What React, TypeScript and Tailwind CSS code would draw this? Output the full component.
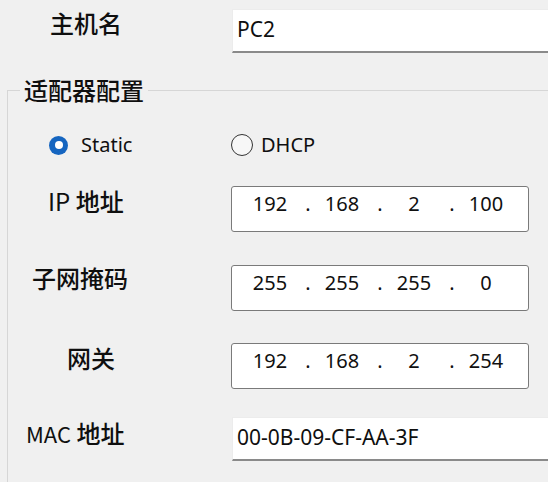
import React, { Fragment } from "react";

const cjk = "font-['Noto_Sans_CJK_SC','Noto_Sans',sans-serif]";

function IpBox({ parts }: { parts: string[] }) {
  return (
    <div className="w-[298px] h-[46px] shrink-0 bg-white border border-[#7a7a7a] rounded-[3px] flex items-start pl-[10px] pt-[3px] font-['Noto_Sans',sans-serif] text-[20px] leading-[28px] text-[#101010]">
      {parts.map((p, i) => (
        <Fragment key={i}>
          <span className="w-[56px] text-center">{p}</span>
          {i < 3 && <span className="w-[16px] pl-[4px] text-center">.</span>}
        </Fragment>
      ))}
    </div>
  );
}

export default function App() {
  return (
    <div className={`w-[548px] h-[482px] overflow-hidden bg-[#f0f0f0] text-[#0f0f0f] ${cjk}`}>
      <div className="flex items-start pt-[9px]">
        <div className="w-[232px] shrink-0 pl-[50px] text-[24px] leading-[28px] font-medium">主机名</div>
        <div className="w-[330px] h-[44px] shrink-0 bg-white border border-[#ececec] border-b-2 border-b-[#8a8a8a] pl-[4px] pt-[5px] font-['Noto_Sans',sans-serif] text-[21px] leading-[28px]">
          PC2
        </div>
      </div>

      <fieldset className="mt-[25px] ml-[7px] w-[570px] h-[420px] border-t border-l border-[#d6d6d6]">
        <legend className="ml-[12px] px-[4px] text-[24px] leading-[24px] font-medium">适配器配置</legend>

        <div className="flex items-center h-[28px] mt-[29px] font-['Noto_Sans',sans-serif] text-[20px]">
          <div className="w-[223px] shrink-0 flex items-center pl-[41px]">
            <div className="w-[19px] h-[19px] rounded-full bg-[#1565c0] flex items-center justify-center">
              <div className="w-[8px] h-[8px] rounded-full bg-white" />
            </div>
            <span className="ml-[13px]">Static</span>
          </div>
          <div className="flex items-center">
            <div className="w-[22px] h-[22px] rounded-full border-[1.5px] border-[#333333] bg-[#f7f7f7]" />
            <span className="ml-[8px]">DHCP</span>
          </div>
        </div>

        <div className="flex items-start mt-[27px]">
          <div className="w-[223px] shrink-0">
            <div className="ml-[40px] mt-[3px] text-[24px] leading-[24px] font-medium">
              <span className="font-normal">IP</span> 地址
            </div>
          </div>
          <IpBox parts={["192", "168", "2", "100"]} />
        </div>

        <div className="flex items-start mt-[33px]">
          <div className="w-[223px] shrink-0">
            <div className="ml-[24px] mt-[1px] text-[24px] leading-[24px] font-medium">子网掩码</div>
          </div>
          <IpBox parts={["255", "255", "255", "0"]} />
        </div>

        <div className="flex items-start mt-[32px]">
          <div className="w-[223px] shrink-0">
            <div className="ml-[59px] mt-[3px] text-[24px] leading-[24px] font-medium">网关</div>
          </div>
          <IpBox parts={["192", "168", "2", "254"]} />
        </div>

        <div className="flex items-start mt-[28px]">
          <div className="w-[224px] shrink-0">
            <div className="ml-[18px] mt-[4px] text-[24px] leading-[24px] font-medium">
              <span className="font-normal text-[22px]">MAC</span> 地址
            </div>
          </div>
          <div className="w-[330px] h-[44px] shrink-0 bg-white border border-[#ececec] border-b-2 border-b-[#8a8a8a] pl-[4px] pt-[5px] font-['Noto_Sans',sans-serif] text-[21px] leading-[28px]">
            00-0B-09-CF-AA-3F
          </div>
        </div>
      </fieldset>
    </div>
  );
}
